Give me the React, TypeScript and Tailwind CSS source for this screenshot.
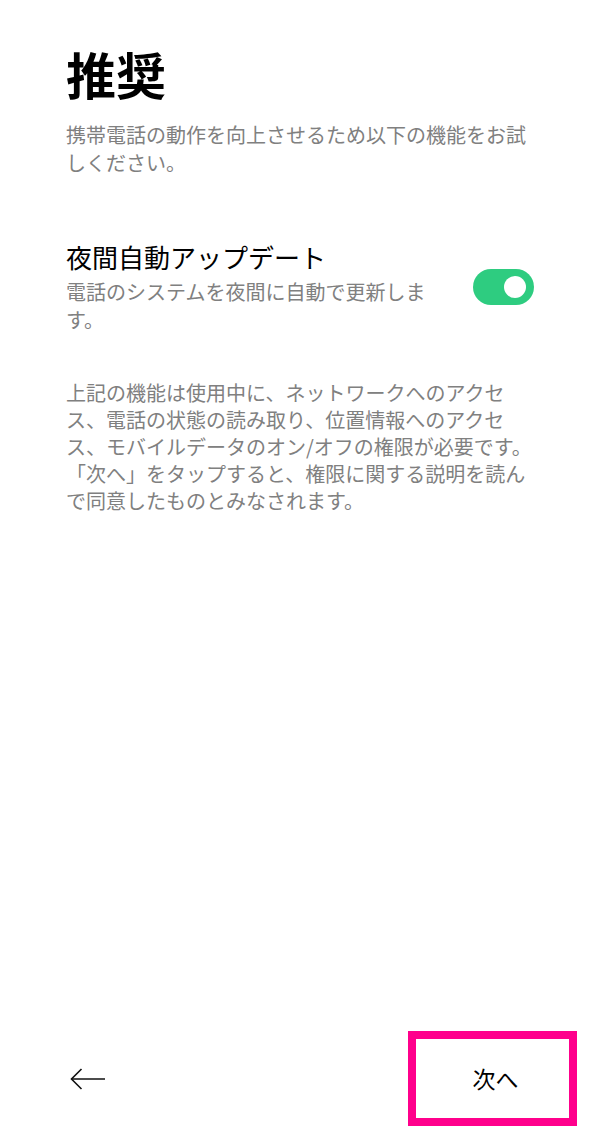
const font = { fontFamily: '"Noto Sans CJK JP", "Noto Sans", sans-serif' };

const Toggle = () => (
  <div className="flex h-[36px] w-[61px] shrink-0 items-center justify-end rounded-full bg-[#2ecc80] pr-[8px]">
    <div className="h-[22px] w-[22px] rounded-full bg-white" />
  </div>
);

const BackArrow = () => (
  <svg width="36" height="22" viewBox="0 0 36 22" fill="none">
    <path d="M1.5 11H35" stroke="#111" strokeWidth="1.6" />
    <path d="M11.5 1L1.5 11L11.5 21" stroke="#111" strokeWidth="1.6" />
  </svg>
);

export default function App() {
  return (
    <div
      className="flex min-h-[1126px] w-[600px] flex-col bg-white pl-[66px] pr-[64px] pt-[43px]"
      style={font}
    >
      <h1 className="text-[50px] font-bold leading-[60px] text-black">推奨</h1>
      <p className="mt-[18px] text-[20px] leading-[28px] text-[#808080]">
        携帯電話の動作を向上させるため以下の機能をお試しください。
      </p>

      <div className="mt-[63px] flex items-center pr-[2px]">
        <div className="flex-1 pr-[30px]">
          <div className="text-[26px] leading-[34px] text-black">夜間自動アップデート</div>
          <div className="mt-[4px] text-[20px] leading-[28px] text-[#808080]">
            電話のシステムを夜間に自動で更新します。
          </div>
        </div>
        <Toggle />
      </div>

      <p className="mt-[45px] text-[20px] leading-[27px] text-[#808080]">
        上記の機能は使用中に、ネットワークへのアクセス、電話の状態の読み取り、位置情報へのアクセス、モバイルデータのオン/オフの権限が必要です。「次へ」をタップすると、権限に関する説明を読んで同意したものとみなされます。
      </p>

      <div className="mt-auto flex items-center justify-between">
        <div className="ml-[4px] flex items-center">
          <BackArrow />
        </div>
        <button className="-mr-[41px] flex h-[95px] w-[169px] items-center justify-center border-[8px] border-[#ff008c] pl-[6px] text-[23px] text-black">
          次へ
        </button>
      </div>
    </div>
  );
}
